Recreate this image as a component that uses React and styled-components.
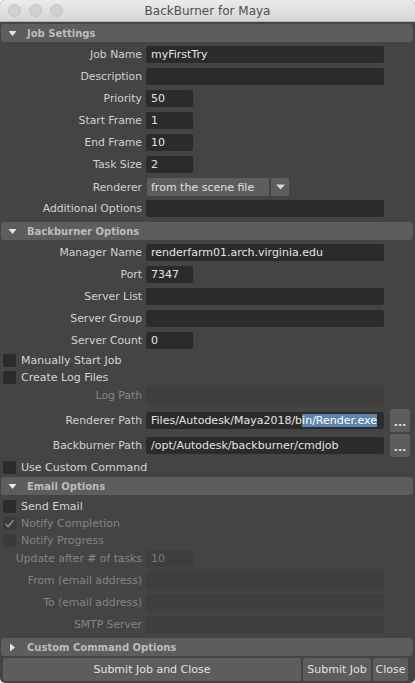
import React from "react";
import styled, { createGlobalStyle } from "styled-components";

const GlobalStyle = createGlobalStyle`
  html, body {
    margin: 0;
    padding: 0;
    background: #ffffff;
  }
  body {
    font-family: "DejaVu Sans", "Liberation Sans", sans-serif;
    font-size: 11px;
  }
`;

const Window = styled.div`
  width: 415px;
  height: 683px;
  background: #444444;
  display: flex;
  flex-direction: column;
  border-radius: 5px;
  overflow: hidden;
  box-sizing: border-box;
`;

const TitleBar = styled.div`
  height: 21px;
  flex: none;
  display: grid;
  grid-template-columns: 1fr auto 1fr;
  align-items: center;
  background: linear-gradient(#ebebeb, #d5d5d5);
  border-bottom: 1px solid #b4b4b4;
  padding: 0 8px;
`;

const Lights = styled.div`
  display: flex;
  gap: 8px;
`;

const Light = styled.span`
  width: 11px;
  height: 11px;
  border-radius: 50%;
  background: #d0d0d0;
  border: 0.5px solid #c3c3c3;
`;

const Title = styled.div`
  font-size: 12px;
  color: #4f4f4f;
`;

const Body = styled.div`
  display: flex;
  flex-direction: column;
  padding: 0 2px 0 1px;
`;

const Header = styled.div`
  height: 18px;
  margin-top: ${(p) => p.$mt ?? 5}px;
  background: #5d5d5d;
  border-radius: 3px;
  display: flex;
  align-items: center;
  gap: 10px;
  padding-left: 7px;
  color: #bcbcbc;
  font-weight: bold;
  font-size: 10px;
`;

const Arrow = styled.svg`
  width: 9px;
  height: 9px;
  flex: none;
`;

const Row = styled.div`
  display: grid;
  grid-template-columns: 141px auto auto;
  column-gap: 4px;
  align-items: center;
  height: ${(p) => p.$h ?? 17}px;
  margin-top: ${(p) => p.$mt ?? 5}px;
`;

const Label = styled.div`
  text-align: right;
  white-space: nowrap;
  font-size: 10.8px;
  color: ${(p) => (p.$off ? "#858585" : "#d2d2d2")};
`;

const Field = styled.div`
  width: ${(p) => (p.$short ? 47 : 238)}px;
  height: 17px;
  box-sizing: border-box;
  background: ${(p) => (p.$off ? "#3e3e3e" : "#2b2b2b")};
  border-radius: 2px;
  padding: 0 4px 0 5px;
  display: flex;
  align-items: center;
  color: ${(p) => (p.$off ? "#7a7a7a" : "#e4e4e4")};
  white-space: nowrap;
  overflow: hidden;
  font-size: 11px;
`;

const Selected = styled.span`
  background: #5e84ad;
  color: #ffffff;
`;

const Dropdown = styled.div`
  display: flex;
  gap: 2px;
  height: 18px;
  margin-left: 1px;
`;

const DropValue = styled.div`
  width: 122px;
  background: #5d5d5d;
  border-radius: 2px 0 0 2px;
  padding-left: 4px;
  box-sizing: border-box;
  display: flex;
  align-items: center;
  color: #e2e2e2;
  font-size: 11px;
`;

const DropButton = styled.div`
  width: 18px;
  background: #5d5d5d;
  border-radius: 0 2px 2px 0;
  display: flex;
  align-items: center;
  justify-content: center;
`;

const DotButton = styled.div`
  width: 20px;
  height: 23px;
  margin-left: -1px;
  background: #5d5d5d;
  border-radius: 2px;
  color: #e4e4e4;
  display: flex;
  align-items: center;
  justify-content: center;
  font-size: 11px;
  font-weight: bold;
  line-height: 1;
  padding-top: 3px;
  box-sizing: border-box;
`;

const CheckRow = styled.div`
  display: flex;
  align-items: center;
  gap: 5px;
  height: 17px;
  padding-left: 2px;
  margin-top: ${(p) => p.$mt ?? 0}px;
  color: ${(p) => (p.$off ? "#858585" : "#d6d6d6")};
  font-size: 11px;
`;

const Box = styled.span`
  width: 13px;
  height: 13px;
  border-radius: 2px;
  background: ${(p) => (p.$off ? "#3a3a3a" : "#2b2b2b")};
  display: flex;
  align-items: center;
  justify-content: center;
`;

const ButtonBar = styled.div`
  display: flex;
  gap: 2px;
  margin: 2px 7px 0 3px;
  height: 23px;
`;

const Button = styled.div`
  flex: ${(p) => (p.$w ? "none" : 1)};
  width: ${(p) => (p.$w ? `${p.$w}px` : "auto")};
  background: #5d5d5d;
  border-radius: 2px;
  color: #e2e2e2;
  display: flex;
  align-items: center;
  justify-content: center;
  font-size: 11px;
  white-space: nowrap;
`;

const Triangle = ({ open }) => (
  <Arrow viewBox="0 0 9 9">
    {open ? (
      <polygon points="0.5,2 8.5,2 4.5,7" fill="#e6e6e6" />
    ) : (
      <polygon points="2,0.5 7,4.5 2,8.5" fill="#e6e6e6" />
    )}
  </Arrow>
);

const Section = ({ title, open = true, mt }) => (
  <Header $mt={mt}>
    <Triangle open={open} />
    {title}
  </Header>
);

const FieldRow = ({ label, value, short, off, mt }) => (
  <Row $mt={mt}>
    <Label $off={off}>{label}</Label>
    <Field $short={short} $off={off}>
      {value}
    </Field>
  </Row>
);

const Check = ({ label, checked, off, mt }) => (
  <CheckRow $off={off} $mt={mt}>
    <Box $off={off}>
      {checked && (
        <svg width="11" height="11" viewBox="0 0 11 11">
          <path d="M1.5 6 L4.2 8.6 L9.5 2" fill="none" stroke="#8a8a8a" strokeWidth="1.6" />
        </svg>
      )}
    </Box>
    {label}
  </CheckRow>
);

const App = () => {
  return (
    <>
      <GlobalStyle />
      <Window>
        <TitleBar>
          <Lights>
            <Light />
            <Light />
            <Light />
          </Lights>
          <Title>BackBurner for Maya</Title>
          <div />
        </TitleBar>
        <Body>
          <Section title="Job Settings" mt={2} />
          <FieldRow label="Job Name" value="myFirstTry" mt={4} />
          <FieldRow label="Description" value="" />
          <FieldRow label="Priority" value="50" short />
          <FieldRow label="Start Frame" value="1" short />
          <FieldRow label="End Frame" value="10" short />
          <FieldRow label="Task Size" value="2" short />
          <Row>
            <Label>Renderer</Label>
            <Dropdown>
              <DropValue>from the scene file</DropValue>
              <DropButton>
                <svg width="9" height="6" viewBox="0 0 9 6">
                  <polygon points="0,0.5 9,0.5 4.5,5.5" fill="#d8d8d8" />
                </svg>
              </DropButton>
            </Dropdown>
          </Row>
          <FieldRow label="Additional Options" value="" />

          <Section title="Backburner Options" />
          <FieldRow label="Manager Name" value="renderfarm01.arch.virginia.edu" mt={4} />
          <FieldRow label="Port" value="7347" short />
          <FieldRow label="Server List" value="" />
          <FieldRow label="Server Group" value="" />
          <FieldRow label="Server Count" value="0" short />
          <Check label="Manually Start Job" mt={3} />
          <Check label="Create Log Files" />
          <FieldRow label="Log Path" value="" off mt={1} />
          <Row $h={23} $mt={5}>
            <Label>Renderer Path</Label>
            <Field>
              Files/Autodesk/Maya2018/b<Selected>in/Render.exe</Selected>
            </Field>
            <DotButton>...</DotButton>
          </Row>
          <Row $h={23} $mt={2}>
            <Label>Backburner Path</Label>
            <Field>/opt/Autodesk/backburner/cmdjob</Field>
            <DotButton>...</DotButton>
          </Row>
          <Check label="Use Custom Command" mt={2} />

          <Section title="Email Options" mt={1} />
          <Check label="Send Email" mt={3} />
          <Check label="Notify Completion" checked off />
          <Check label="Notify Progress" off />
          <FieldRow label="Update after # of tasks" value="10" short off mt={1} />
          <FieldRow label="From (email address)" value="" off />
          <FieldRow label="To (email address)" value="" off />
          <FieldRow label="SMTP Server" value="" off />

          <Section title="Custom Command Options" open={false} />
        </Body>
        <ButtonBar>
          <Button>Submit Job and Close</Button>
          <Button $w={68}>Submit Job</Button>
          <Button $w={35}>Close</Button>
        </ButtonBar>
      </Window>
    </>
  );
};

export default App;
